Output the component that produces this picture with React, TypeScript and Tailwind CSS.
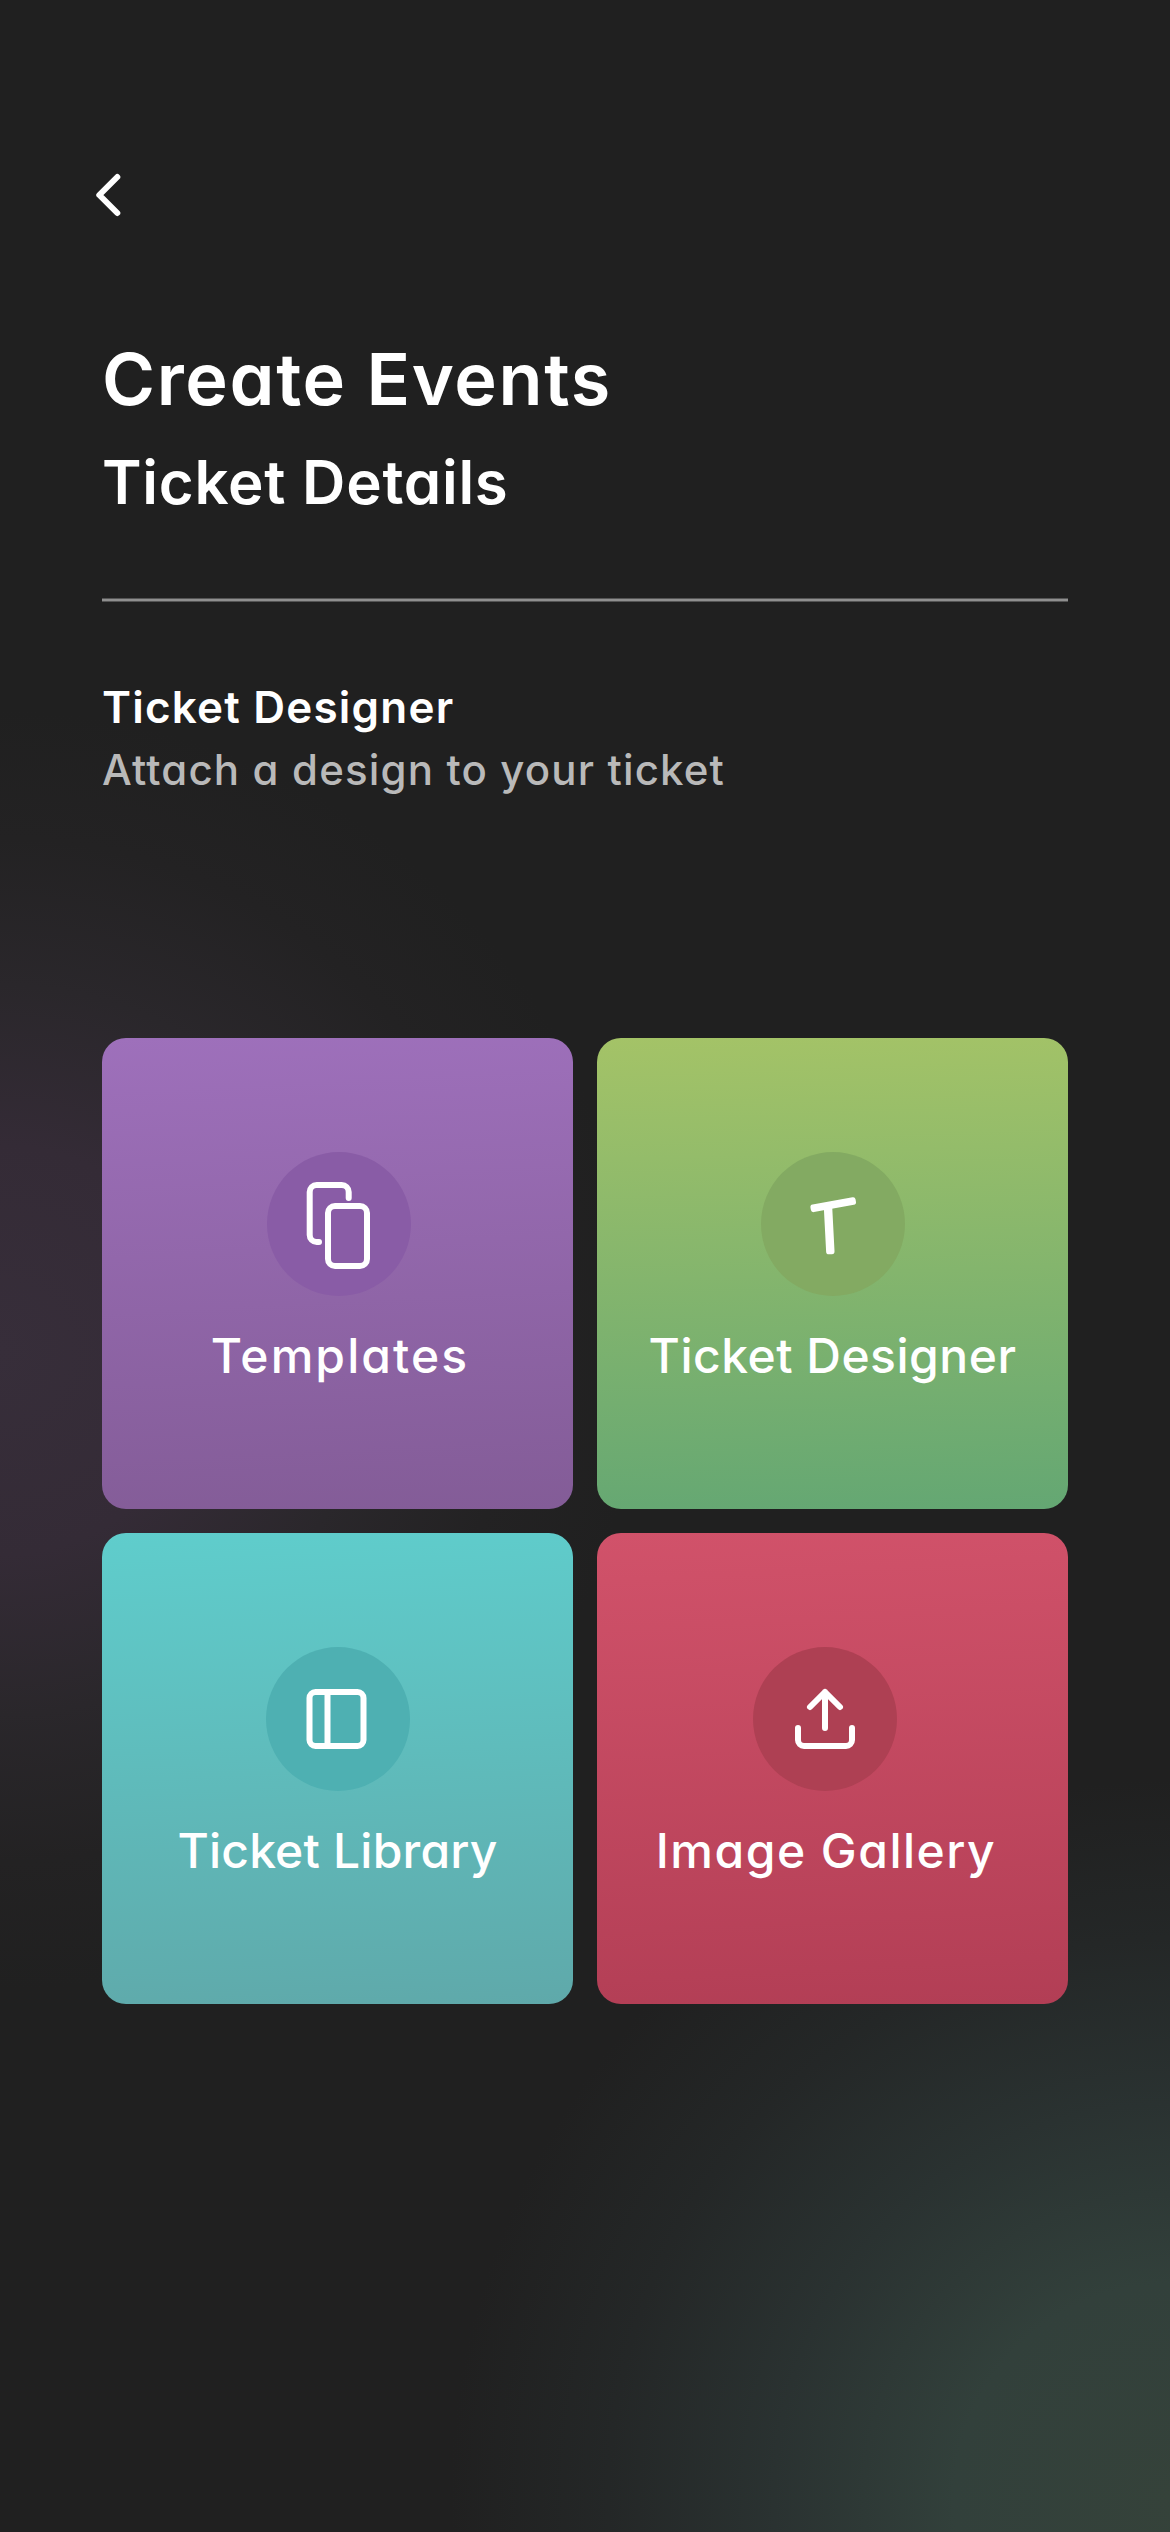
import type { ReactNode } from 'react';
import { clsx } from 'clsx';

interface TileProps {
  label: string;
  icon: ReactNode;
  className: string;
  circleClassName: string;
  labelClassName: string;
}

function TemplatesIcon() {
  return (
    <svg viewBox="0 0 144 144" fill="none" stroke="currentColor" strokeWidth="6" strokeLinecap="round">
      <path d="M81.7 46v-6a7 7 0 0 0-7-7h-25a7 7 0 0 0-7 7v43a7 7 0 0 0 7 7H52" />
      <rect x="61" y="54" width="39" height="60" rx="7" />
    </svg>
  );
}

function DesignerIcon() {
  return (
    <svg viewBox="0 0 144 144" fill="currentColor">
      <rect x="49.3" y="48.9" width="45.8" height="7.6" rx="2.6" transform="rotate(-10.5 72 52.6)" />
      <rect x="64" y="53" width="8.4" height="49.3" rx="2.8" transform="rotate(-3 68.1 78)" />
    </svg>
  );
}

function LibraryIcon() {
  return (
    <svg viewBox="0 0 144 144" fill="none" stroke="currentColor" strokeWidth="6">
      <rect x="43.5" y="45" width="54" height="54" rx="6" />
      <path d="M61.5 45v54" />
    </svg>
  );
}

function UploadIcon() {
  return (
    <svg viewBox="0 0 144 144" fill="none" stroke="currentColor" strokeWidth="6" strokeLinecap="round" strokeLinejoin="round">
      <path d="M72 81V45M57 60l15-15 15 15" />
      <path d="M45 81v12a6 6 0 0 0 6 6h42a6 6 0 0 0 6-6V81" />
    </svg>
  );
}

function Tile({ label, icon, className, circleClassName, labelClassName }: TileProps) {
  return (
    <button className={clsx('flex h-[471px] flex-col items-center rounded-3xl pt-[114px] text-white', className)}>
      <span className={clsx('block size-36 rounded-full', circleClassName)}>{icon}</span>
      <span className={clsx('mt-7 text-[48px] leading-[64px] font-medium whitespace-nowrap', labelClassName)}>
        {label}
      </span>
    </button>
  );
}

export default function App() {
  return (
    <div className="h-[2532px] w-[1170px] overflow-hidden bg-[#202020] bg-[radial-gradient(circle_640px_at_0px_1350px,#372e3a_0%,#342b36_32%,#2a272b_57%,#232223_80%,transparent_100%),radial-gradient(circle_720px_at_1170px_2500px,#35423a_0%,#32403b_30%,#2a3231_55%,#242727_78%,transparent_100%)] px-[102px] font-['Inter','Open_Sans',sans-serif] text-white [font-feature-settings:'cv11']">
      {/* Back */}
      <header className="flex h-[339px] pt-[171px]">
        <button className="-ml-[12px] h-12 w-9">
          <svg viewBox="0 0 36 48" fill="none" stroke="currentColor" strokeWidth="6" strokeLinecap="round" strokeLinejoin="round">
            <path d="M27.3 6 9.3 24l18 18" />
          </svg>
        </button>
      </header>

      {/* Titles */}
      <div className="h-[259px] whitespace-nowrap">
        <h1 className="text-[72px] leading-[80px] font-semibold tracking-[1.65px]">Create Events</h1>
        <h2 className="mt-[27px] text-[60px] leading-[72px] font-semibold tracking-[0.75px]">Ticket Details</h2>
      </div>

      <div className="h-1 border-y border-[#555555] bg-[#8f8f8f]" />

      <div className="mt-[77px] h-[359px] whitespace-nowrap">
        <h3 className="text-[44px] leading-[56px] font-semibold tracking-[1.2px]">Ticket Designer</h3>
        <p className="mt-[7px] text-[42px] leading-[56px] font-medium tracking-[1.15px] text-[#b9b9b9]">
          Attach a design to your ticket
        </p>
      </div>

      {/* Design sources */}
      <div className="grid grid-cols-2 gap-6">
        <Tile
          label="Templates"
          icon={<TemplatesIcon />}
          className="bg-linear-[177deg] from-[#9e70bb] to-[#835c97] pl-[3px]"
          circleClassName="bg-[#895ca6]"
          labelClassName="-mr-[2px] tracking-[2.1px]"
        />
        <Tile
          label="Ticket Designer"
          icon={<DesignerIcon />}
          className="bg-linear-[178deg] from-[#a4c367] to-[#64a773]"
          circleClassName="bg-[#83aa62]"
          labelClassName="tracking-[0.5px]"
        />
        <Tile
          label="Ticket Library"
          icon={<LibraryIcon />}
          className="bg-linear-[177deg] from-[#5fcdcc] to-[#5fa9aa]"
          circleClassName="bg-[#4eb0b2]"
          labelClassName="tracking-[0.2px]"
        />
        <Tile
          label="Image Gallery"
          icon={<UploadIcon />}
          className="bg-linear-[177deg] from-[#d1526a] to-[#b23e55] pr-[15px]"
          circleClassName="bg-[#ae4053]"
          labelClassName="-mr-[2px] tracking-[1.5px]"
        />
      </div>
    </div>
  );
}
